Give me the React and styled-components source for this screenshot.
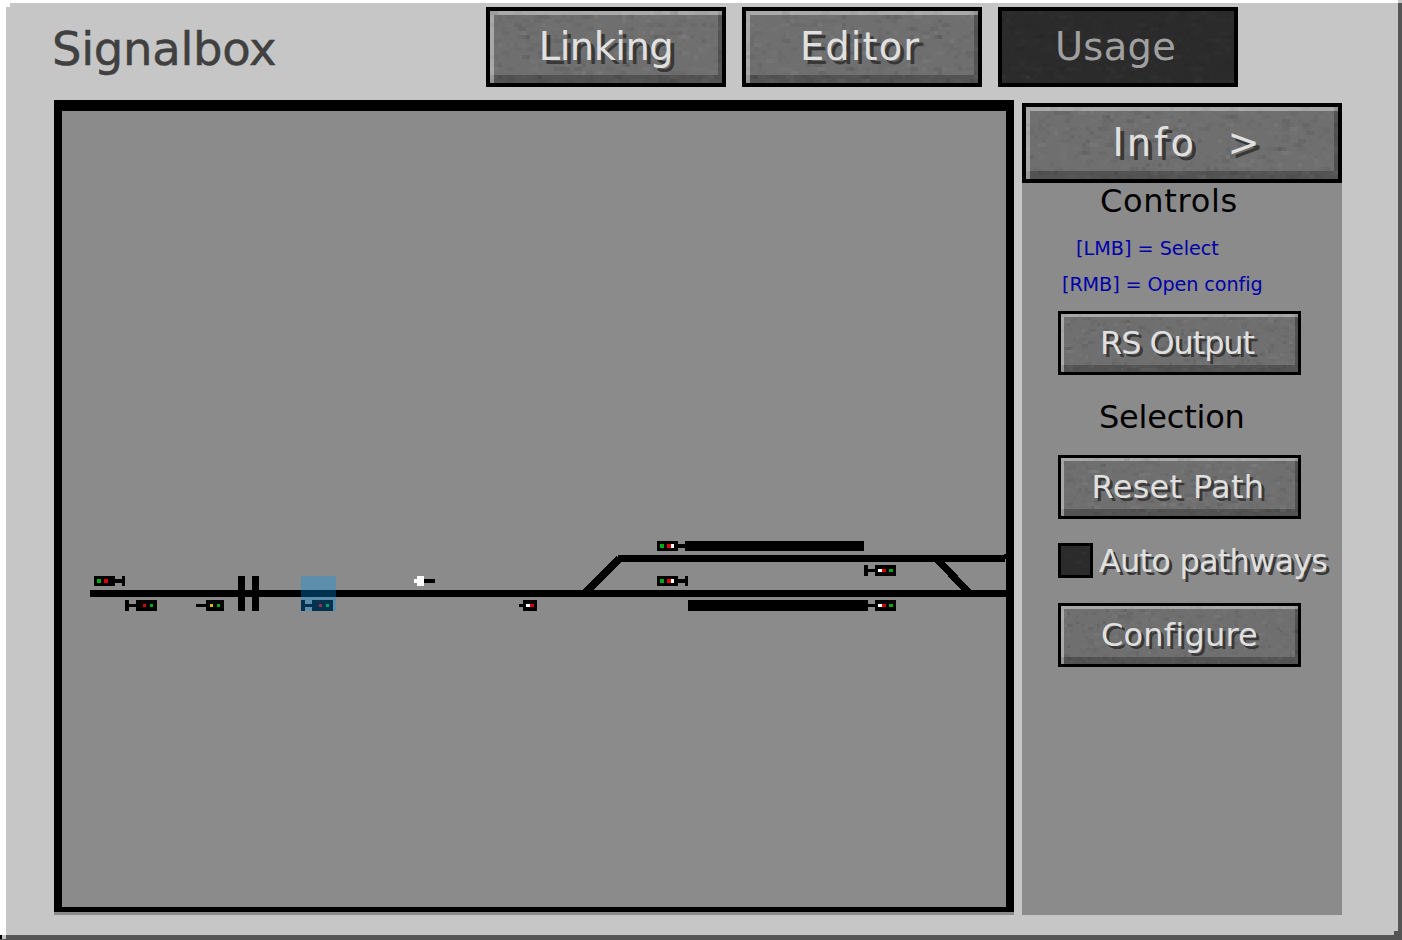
import React from "react";
import styled, { createGlobalStyle, css } from "styled-components";

const Global = createGlobalStyle`
  * { box-sizing: border-box; }
  body { margin: 0; background: #fff; overflow: hidden; }
`;

const Window = styled.main`
  position: relative;
  width: 1402px;
  height: 940px;
  background: #c6c6c6;
  border-style: solid;
  border-width: 3px 4px 5px 6px;
  border-color: #fff #555 #555 #fff;
  font-family: "DejaVu Sans", sans-serif;
`;

const Corners = styled.svg`
  position: absolute;
  left: -6px;
  top: -3px;
  pointer-events: none;
`;

const Header = styled.header`
  display: flex;
  align-items: flex-start;
  height: 97px;
  padding: 4px 0 0 46px;
`;

const Title = styled.h1`
  width: 434px;
  margin: 0;
  color: #404040;
  font-size: 46.5px;
  font-weight: 400;
  line-height: 84px;
  letter-spacing: -0.3px;
  white-space: pre;
  -webkit-text-stroke: 0.5px #404040;
`;

const Tabs = styled.nav`
  display: flex;
  gap: 16px;
`;

const bevel = css`
  &::before {
    content: "";
    position: absolute;
    inset: 0;
    box-shadow: ${(p) =>
      p.$small
        ? "inset 3px 3px 0 rgba(255,255,255,0.4), inset -3px -7px 0 rgba(0,0,0,0.25)"
        : "inset 4px 4px 0 rgba(255,255,255,0.4), inset -4px -8px 0 rgba(0,0,0,0.25)"};
  }
`;

const ButtonBox = styled.button`
  position: relative;
  display: flex;
  justify-content: center;
  align-items: center;
  flex: none;
  width: ${(p) => p.$width}px;
  height: ${(p) => (p.$small ? 64 : 80)}px;
  padding: 0;
  border: ${(p) => (p.$small ? 3 : 4)}px solid #000;
  border-radius: 0;
  background: ${(p) => (p.$off ? "#2b2b2b" : "#6f6f6f")};
  overflow: hidden;
  ${(p) => !p.$off && bevel}
`;

const Grain = styled.svg`
  position: absolute;
  inset: 0;
`;

const Label = styled.span`
  position: relative;
  padding: ${(p) => p.$pad || "0"};
  font-family: "DejaVu Sans", sans-serif;
  font-size: ${(p) => (p.$small ? 32 : 38.4)}px;
  line-height: 1.2;
  letter-spacing: ${(p) => p.$track || 0}px;
  white-space: pre;
  color: ${(p) => (p.$off ? "#a0a0a0" : "#e0e0e0")};
  text-shadow: ${(p) =>
    p.$off ? "none" : p.$small ? "3px 3px 0 #383838" : "4px 4px 0 #383838"};
`;

function Texture({ width, height, cell, seed, dark }) {
  let s = seed * 7919 + 17;
  const rand = () => {
    s = (s * 1103515245 + 12345) % 2147483648;
    return s / 2147483648;
  };
  const specks = [];
  for (let y = 0; y < height; y += cell) {
    for (let x = 0; x < width; x += cell) {
      const r = rand();
      if (r < 0.26) {
        const light = rand() > 0.5;
        specks.push(
          <rect
            key={`${x}-${y}`}
            x={x}
            y={y}
            width={rand() > 0.5 ? cell * 2 : cell}
            height={cell}
            fill={light ? "#fff" : "#000"}
            opacity={(light ? 0.03 : 0.05) * (dark ? 0.6 : 1) * (r < 0.06 ? 1.4 : 0.6)}
          />
        );
      }
    }
  }
  return (
    <Grain width={width} height={height} shapeRendering="crispEdges" aria-hidden="true">
      {specks}
    </Grain>
  );
}

function StoneButton({ children, width, small, off, track, pad, seed }) {
  return (
    <ButtonBox $width={width} $small={small} $off={off}>
      <Texture width={width} height={80} cell={small ? 3 : 4} seed={seed} dark={off} />
      <Label $small={small} $off={off} $track={track} $pad={pad}>
        {children}
      </Label>
    </ButtonBox>
  );
}

const Content = styled.div`
  display: flex;
  align-items: flex-end;
  gap: 8px;
  height: 815px;
  padding-left: 48px;
`;

const MapFrame = styled.section`
  width: 960px;
  height: 815px;
  background: #8b8b8b;
  border-bottom: 3px solid #8b8b8b;
`;

const MapScreen = styled.div`
  height: 812px;
  border: solid #000;
  border-width: 11px 8px 5px;
`;

const TrackPlan = styled.svg`
  display: block;
`;

const Sidebar = styled.aside`
  display: flex;
  flex-direction: column;
  width: 320px;
  height: 812px;
  background: #8b8b8b;
`;

const Heading = styled.h2`
  height: 40px;
  margin: ${(p) => p.$top || 0}px 0 0;
  padding-left: ${(p) => p.$left}px;
  color: #000;
  font-size: 32px;
  font-weight: 400;
  line-height: ${(p) => p.$line || 40}px;
  letter-spacing: ${(p) => p.$track}px;
  white-space: pre;
`;

const Hint = styled.p`
  height: 36px;
  margin: 0;
  padding-left: ${(p) => p.$left}px;
  color: #0000aa;
  font-size: 19.2px;
  line-height: 34px;
  letter-spacing: ${(p) => p.$track || 0}px;
  white-space: pre;
`;

const Hints = styled.div`
  margin-top: 9px;
`;

const Row = styled.div`
  display: flex;
  align-items: center;
  height: ${(p) => p.$height || 64}px;
  margin-top: ${(p) => p.$top}px;
  padding-left: 36px;
`;

const CheckBox = styled.span`
  position: relative;
  flex: none;
  width: 35px;
  height: 35px;
  margin-right: 6px;
  border: 3px solid #000;
  background: #2b2b2b;
  overflow: hidden;
`;

const LAMPS = { g: "#00aa10", r: "#d80000", w: "#fff", y: "#d0c000" };

/* A signal head: body, stem, optional foot, and its lamps as [x, width, colour]. */
function Signal({ y, h = 11, body, stem, foot, lamps }) {
  const ly = h === 11 ? y + 4 : y + 3;
  const lh = h === 11 ? 3 : 4;
  return (
    <g>
      <rect x={body[0]} y={y} width={body[1]} height={h} />
      <rect x={stem[0]} y={ly} width={stem[1]} height={lh} />
      {foot && <rect x={foot[0]} y={y} width={foot[1]} height={h} />}
      {lamps.map(([x, w, c]) => (
        <rect key={x} x={x} y={ly} width={w} height={lh} fill={LAMPS[c]} />
      ))}
    </g>
  );
}

const SIGNALS = [
  { y: 576, h: 10, body: [94, 21], stem: [115, 7], foot: [122, 3], lamps: [[97, 4, "g"], [104, 4, "r"]] },
  { y: 600, body: [136, 21], stem: [129, 7], foot: [125, 4], lamps: [[143, 3, "r"], [150, 3, "g"]] },
  { y: 600, body: [206, 18], stem: [196, 10], lamps: [[210, 3, "y"], [217, 3, "g"]] },
  { y: 600, body: [312, 21], stem: [305, 7], foot: [301, 4], lamps: [[319, 3, "r"], [326, 3, "g"]] },
  { y: 600, body: [523, 14], stem: [519, 4], lamps: [[526, 4, "w"], [530, 4, "r"]] },
  { y: 541, h: 10, body: [657, 21], stem: [678, 7], lamps: [[660, 4, "g"], [667, 4, "r"], [671, 3, "w"]] },
  { y: 576, h: 10, body: [657, 21], stem: [678, 7], foot: [685, 3], lamps: [[660, 4, "g"], [667, 4, "r"], [671, 3, "w"]] },
  { y: 565, body: [875, 21], stem: [868, 7], foot: [864, 4], lamps: [[878, 4, "w"], [882, 4, "r"], [889, 4, "g"]] },
  { y: 600, body: [875, 21], stem: [868, 7], lamps: [[878, 4, "w"], [882, 4, "r"], [889, 4, "g"]] },
];

function Plan() {
  return (
    <TrackPlan width="944" height="796" viewBox="62 111 944 796" shapeRendering="crispEdges">
      <rect x="90" y="590" width="916" height="7" />
      <rect x="618" y="555" width="387" height="7" />
      <path d="M1004 554h2v5h-2z" />
      <path d="M582 591L615 557L617 556L618 558L621 560V562L592 591Z" />
      <path d="M934 561H944L972 591H962Z" />
      <rect x="238" y="576" width="7" height="35" />
      <rect x="252" y="576" width="7" height="35" />
      <rect x="685" y="541" width="179" height="10" />
      <rect x="688" y="600" width="180" height="11" />
      {SIGNALS.map((s, i) => (
        <Signal key={i} {...s} />
      ))}
      <rect x="424" y="579" width="11" height="4" />
      <path fill="#fff" d="M414 579h3v-3h7v10h-7v-3h-3z" />
      <rect x="301" y="576" width="35" height="35" fill="#0098f0" opacity="0.33" />
    </TrackPlan>
  );
}

export default function App() {
  return (
    <>
      <Global />
      <Window>
        <Corners width="1402" height="940" shapeRendering="crispEdges" aria-hidden="true">
          <path fill="#fff" d="M0 0h10v7h-4v928h-6z" />
          <path fill="#c6c6c6" d="M1398 0h4v3h-4zM2 935h4v4h-4z" />
          <path fill="#000" d="M0 935h2v4h-2z" />
          <path fill="#555" d="M1398 3h4v937H0v-1h6v-4h1388v-4h4z" />
        </Corners>
        <Header>
          <Title>Signalbox</Title>
          <Tabs>
            <StoneButton width={240} seed={1} track={-0.5}>Linking</StoneButton>
            <StoneButton width={240} seed={2} track={1.1} pad="0 4px 0 0">Editor</StoneButton>
            <StoneButton width={240} seed={3} track={0.3} pad="0 5px 0 0" off>Usage</StoneButton>
          </Tabs>
        </Header>
        <Content>
          <MapFrame>
            <MapScreen>
              <Plan />
            </MapScreen>
          </MapFrame>
          <Sidebar>
            <StoneButton width={320} seed={4} track={3} pad="0 0 0 11px">{"Info  >"}</StoneButton>
            <Heading $left={78} $track={0.7} $line={37}>Controls</Heading>
            <Hints>
              <Hint $left={54}>[LMB] = Select</Hint>
              <Hint $left={40} $track={-0.1}>[RMB] = Open config</Hint>
            </Hints>
            <Row $top={7}>
              <StoneButton width={243} seed={5} track={-1.1} pad="0 5px 0 0" small>RS Output</StoneButton>
            </Row>
            <Heading $top={22} $left={77} $track={-0.2}>Selection</Heading>
            <Row $top={18}>
              <StoneButton width={243} seed={6} track={0.3} pad="0 3px 0 0" small>Reset Path</StoneButton>
            </Row>
            <Row $top={24} $height={35}>
              <CheckBox>
                <Texture width={29} height={29} cell={3} seed={8} dark />
              </CheckBox>
              <Label $small $track={-0.8} $pad="2px 0 0">Auto pathways</Label>
            </Row>
            <Row $top={25}>
              <StoneButton width={243} seed={7} track={0.2} small>Configure</StoneButton>
            </Row>
          </Sidebar>
        </Content>
      </Window>
    </>
  );
}
